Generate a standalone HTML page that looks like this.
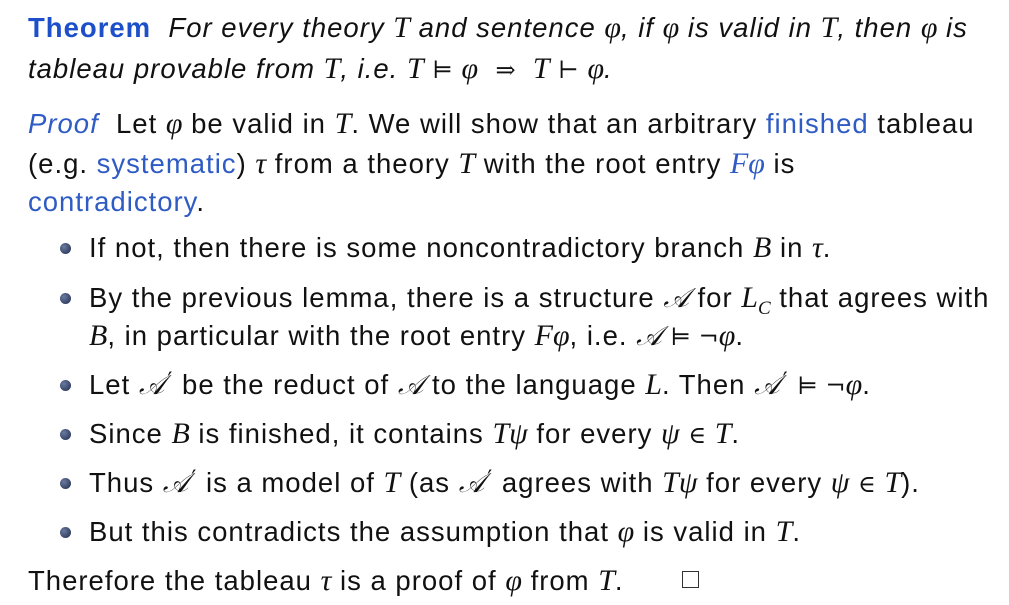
<!DOCTYPE html><html><head><meta charset="utf-8"><style>
body{margin:0;width:1009px;height:605px;background:#fff;position:relative;overflow:hidden;font-family:"Liberation Sans","DejaVu Sans",sans-serif;font-size:27.5px;letter-spacing:1px;color:#111}
.l{position:absolute;white-space:nowrap;line-height:30px;height:30px}
.m{font-family:"Liberation Serif","DejaVu Serif",serif;font-style:italic;font-size:30px;letter-spacing:0}
.r{font-family:"DejaVu Serif",serif;font-style:normal;font-size:24px;letter-spacing:0}
.b{color:#2f5bc4}
.th{color:#1c4fc9;font-weight:bold}
i{font-style:italic}
.d{position:absolute;left:60px;width:11px;height:11px;border-radius:50%;background:radial-gradient(circle at 35% 35%,#6a7aa0,#1d2a4a)}
.cal{font-family:"DejaVu Serif",serif;font-style:italic;font-size:27px;letter-spacing:0}
.p{font-family:"DejaVu Sans",sans-serif;font-style:normal;font-size:22px;position:relative;top:-6px;margin-left:3px}
.s{font-size:19px;position:relative;top:7px}
</style></head><body>
<div class="l" style="left:28px;top:13px"><span class="th">Theorem</span>&nbsp; <i>For every theory <span class="m">T</span> and sentence <span class="m">φ</span>, if <span class="m">φ</span> is valid in <span class="m">T</span>, then <span class="m">φ</span> is</i></div>
<div class="l" style="left:28px;top:54px"><i>tableau provable from <span class="m">T</span>, i.e. <span class="m">T</span> <span class="r">⊨</span> <span class="m">φ</span> &nbsp;<span class="r">⇒</span>&nbsp; <span class="m">T</span> <span class="r">⊢</span> <span class="m">φ</span>.</i></div>
<div class="l" style="left:28px;top:109px"><i class="b">Proof</i>&nbsp; Let <span class="m">φ</span> be valid in <span class="m">T</span>. We will show that an arbitrary <span class="b">finished</span> tableau</div>
<div class="l" style="left:28px;top:149px">(e.g. <span class="b">systematic</span>) <span class="m">τ</span> from a theory <span class="m">T</span> with the root entry <span class="m b">Fφ</span> is</div>
<div class="l" style="left:28px;top:187px"><span class="b">contradictory</span>.</div>
<div class="d" style="top:243px"></div><div class="l" style="left:89px;top:233px">If not, then there is some noncontradictory branch <span class="m">B</span> in <span class="m">τ</span>.</div>
<div class="d" style="top:293px"></div><div class="l" style="left:89px;top:283px">By the previous lemma, there is a structure <span class="cal">𝒜</span> for <span class="m">L<span class="s">C</span></span> that agrees with</div>
<div class="l" style="left:89px;top:321px"><span class="m">B</span>, in particular with the root entry <span class="m">Fφ</span>, i.e. <span class="cal">𝒜</span> <span class="r">⊨ ¬</span><span class="m">φ</span>.</div>
<div class="d" style="top:380px"></div><div class="l" style="left:89px;top:370px">Let <span class="cal">𝒜</span><span class="p">′</span> be the reduct of <span class="cal">𝒜</span> to the language <span class="m">L</span>. Then <span class="cal">𝒜</span><span class="p">′</span> <span class="r">⊨ ¬</span><span class="m">φ</span>.</div>
<div class="d" style="top:429px"></div><div class="l" style="left:89px;top:419px">Since <span class="m">B</span> is finished, it contains <span class="m">Tψ</span> for every <span class="m">ψ</span> <span class="r">∈</span> <span class="m">T</span>.</div>
<div class="d" style="top:478px"></div><div class="l" style="left:89px;top:468px">Thus <span class="cal">𝒜</span><span class="p">′</span> is a model of <span class="m">T</span> (as <span class="cal">𝒜</span><span class="p">′</span> agrees with <span class="m">Tψ</span> for every <span class="m">ψ</span> <span class="r">∈</span> <span class="m">T</span>).</div>
<div class="d" style="top:527px"></div><div class="l" style="left:89px;top:517px">But this contradicts the assumption that <span class="m">φ</span> is valid in <span class="m">T</span>.</div>
<div class="l" style="left:28px;top:566px">Therefore the tableau <span class="m">τ</span> is a proof of <span class="m">φ</span> from <span class="m">T</span>.</div>
<div style="position:absolute;left:682px;top:571px;width:17px;height:17px;border:1.5px solid #333;box-sizing:border-box"></div>
</body></html>
